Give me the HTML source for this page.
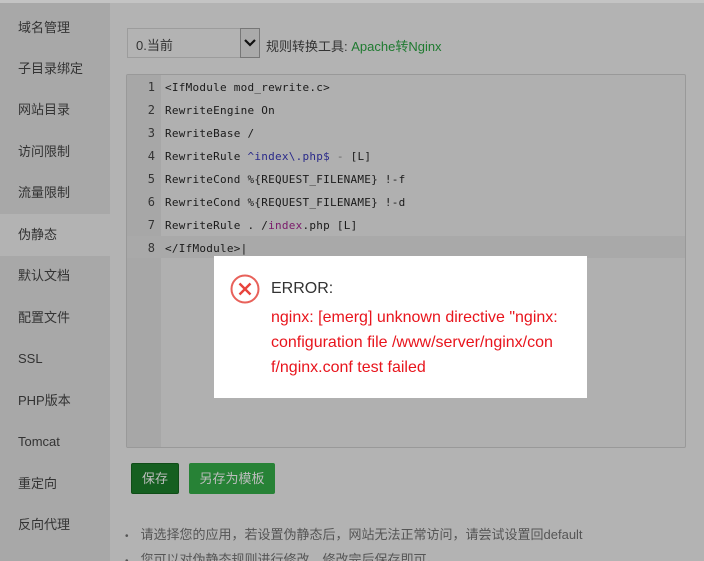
<!DOCTYPE html>
<html><head><meta charset="utf-8"><style>
*{margin:0;padding:0;box-sizing:border-box}
html,body{width:704px;height:561px;overflow:hidden}
body{background:#b3b3b3;font-family:"Liberation Sans","Noto Sans CJK SC",sans-serif;position:relative}
.top{position:absolute;left:0;top:0;width:704px;height:3px;background:#c4c4c4}
.side{position:absolute;left:0;top:3px;width:110px;height:558px;background:#a8a8a8}
.side .it{position:absolute;left:18px;font-size:13px;color:#333;line-height:16px}
.side .act{position:absolute;left:0;top:211px;width:110px;height:42px;background:#b3b3b3}
.sel{position:absolute;left:127px;top:28px;width:133px;height:30px;border:1px solid #9c9c9c;background:#b3b3b3;font-size:13px;color:#333;padding:6px 0 0 8px}
.arr{position:absolute;left:240px;top:28px;width:20px;height:30px;border:1px solid #777;background:#aaa}
.lbl{position:absolute;left:266px;top:36px;font-size:13px;color:#333}
.lbl span{color:#1f7a30}
.ed{position:absolute;left:126px;top:74px;width:560px;height:374px;border:1px solid #999;border-radius:2px;background:#b0b0b0;overflow:hidden}
.gut{position:absolute;left:0;top:0;width:34px;height:100%;background:#a7a7a7}
.hl{position:absolute;left:0;top:161px;width:100%;height:22px;background:#a9a9a9}
.code{position:absolute;left:0;top:1px;font-family:"DejaVu Sans Mono","Liberation Mono",monospace;font-size:11px;letter-spacing:0.25px;color:#1a1a1a}
.code div{height:23px;line-height:23px;white-space:pre}
.code b{display:inline-block;width:28px;text-align:right;font-weight:normal;color:#333;margin-right:10px;font-size:12px;letter-spacing:0}
.bl{color:#2a2a8a}.pu{color:#7a1a6a}.gr{color:#666}
.dlg{position:absolute;left:214px;top:256px;width:373px;height:142px;background:#fff}
.dlg .t{position:absolute;left:57px;top:24px;font-size:16px;color:#333}
.dlg .m{position:absolute;left:57px;top:49px;font-size:16px;line-height:25px;color:#e8141c;width:310px}
.b1{position:absolute;left:131px;top:463px;width:48px;height:31px;background:#155f20;border:1px solid #0f4d17;border-radius:2px;color:#bdbdbd;font-size:13px;text-align:center;line-height:29px}
.b2{position:absolute;left:189px;top:463px;width:86px;height:31px;background:#278236;border-radius:2px;color:#bdbdbd;font-size:13px;text-align:center;line-height:31px}
.nt{position:absolute;left:125px;font-size:13px;color:#555;white-space:nowrap}
.nt i{font-style:normal;margin-right:12px;font-size:10px}
</style></head><body>
<div class="top"></div>
<div class="side">
<div class="act"></div>
<div class="it" style="top:17px">域名管理</div>
<div class="it" style="top:58px">子目录绑定</div>
<div class="it" style="top:99px">网站目录</div>
<div class="it" style="top:141px">访问限制</div>
<div class="it" style="top:182px">流量限制</div>
<div class="it" style="top:224px">伪静态</div>
<div class="it" style="top:265px">默认文档</div>
<div class="it" style="top:307px">配置文件</div>
<div class="it" style="top:348px">SSL</div>
<div class="it" style="top:390px">PHP版本</div>
<div class="it" style="top:431px">Tomcat</div>
<div class="it" style="top:473px">重定向</div>
<div class="it" style="top:514px">反向代理</div>
</div>
<div class="sel">0.当前</div>
<div class="arr"><svg width="18" height="28" viewBox="0 0 18 28"><path d="M4 11 L9 16 L14 11" stroke="#111" stroke-width="2.2" fill="none"/></svg></div>
<div class="lbl">规则转换工具: <span>Apache转Nginx</span></div>
<div class="ed">
<div class="gut"></div>
<div class="hl"></div>
<div class="code">
<div><b>1</b>&lt;IfModule mod_rewrite.c&gt;</div>
<div><b>2</b>RewriteEngine On</div>
<div><b>3</b>RewriteBase /</div>
<div><b>4</b>RewriteRule <span class="bl">^index\.php$</span> <span class="gr">-</span> [L]</div>
<div><b>5</b>RewriteCond %{REQUEST_FILENAME} !-f</div>
<div><b>6</b>RewriteCond %{REQUEST_FILENAME} !-d</div>
<div><b>7</b>RewriteRule . /<span class="pu">index</span>.php [L]</div>
<div><b>8</b>&lt;/IfModule&gt;|</div>
</div>
</div>
<div class="dlg">
<svg style="position:absolute;left:15px;top:17px" width="32" height="32" viewBox="0 0 32 32"><circle cx="16" cy="16" r="13.5" fill="none" stroke="#e8615a" stroke-width="2"/><path d="M10.5 10.5 L21.5 21.5 M21.5 10.5 L10.5 21.5" stroke="#e8433c" stroke-width="2.4"/></svg>
<div class="t">ERROR:</div>
<div class="m">nginx: [emerg] unknown directive "nginx: configuration file /www/server/nginx/con f/nginx.conf test failed</div>
</div>
<div class="b1">保存</div>
<div class="b2">另存为模板</div>
<div class="nt" style="top:524px"><i>•</i>请选择您的应用，若设置伪静态后，网站无法正常访问，请尝试设置回default</div>
<div class="nt" style="top:549px"><i>•</i>您可以对伪静态规则进行修改，修改完后保存即可。</div>
</body></html>
